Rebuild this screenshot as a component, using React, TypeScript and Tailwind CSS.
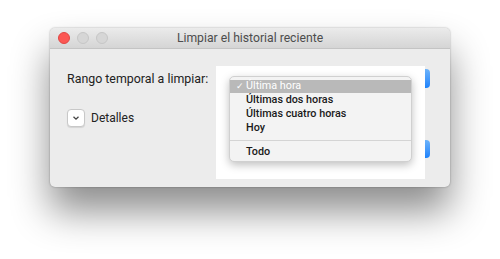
import React from "react";

export default function App() {
  const font = { fontFamily: "Roboto, 'Noto Sans', sans-serif" };
  return (
    <div className="w-[500px] h-[259px] bg-white relative overflow-hidden" style={font}>
      <div className="absolute left-[50px] top-[28px] w-[400px] h-[159px] rounded-[5px] bg-[#ececec] shadow-[0_24px_38px_rgba(0,0,0,0.45),0_0_2px_rgba(0,0,0,0.35)] flex flex-col overflow-hidden">
        <div className="h-[21px] flex items-center relative bg-gradient-to-b from-[#ebebeb] to-[#d5d5d5] border-b border-[#c4c4c4]">
          <div className="flex items-center gap-[7px] pl-[8px]">
            <span className="w-[12px] h-[12px] rounded-full bg-[#fc5753] border border-[#df4744]" />
            <span className="w-[12px] h-[12px] rounded-full bg-[#d6d6d6] border border-[#c6c6c6]" />
            <span className="w-[12px] h-[12px] rounded-full bg-[#d6d6d6] border border-[#c6c6c6]" />
          </div>
          <div className="absolute inset-0 flex items-center justify-center text-[12.2px] text-[#4d4d4d]">
            Limpiar el historial reciente
          </div>
        </div>
        <div className="flex-1 flex flex-col pl-[17px] pt-[22px] gap-[22px] text-[#222]">
          <div className="leading-[16px] text-[12.4px]">Rango temporal a limpiar:</div>
          <div className="flex items-center gap-[6px] text-[12px]">
            <span className="w-[18px] h-[18px] rounded-[4px] bg-white border border-[#c8c8c8] shadow-[0_1px_1px_rgba(0,0,0,0.1)] flex items-center justify-center">
              <svg width="8" height="6" viewBox="0 0 8 6"><path d="M1.5 1.8 L4 4.2 L6.5 1.8" fill="none" stroke="#444" strokeWidth="1.3" /></svg>
            </span>
            <span>Detalles</span>
          </div>
        </div>
        <div className="absolute left-[362px] top-[41px] w-[18px] h-[19px] rounded-[4px] bg-gradient-to-b from-[#6cb3fa] to-[#1a82fb]" />
        <div className="absolute left-[362px] top-[112px] w-[18px] h-[18px] rounded-[4px] bg-gradient-to-b from-[#6cb3fa] to-[#1a82fb]" />
        <div className="absolute left-[166px] top-[38px] w-[209px] h-[113px] bg-white">
          <div className="absolute left-[13px] top-[10px] w-[183px] h-[86px] rounded-[5px] bg-[#f3f3f3] border border-[#d0d0d0] shadow-[0_3px_8px_rgba(0,0,0,0.25)] pt-[3px] text-[10.8px] font-medium text-[#1a1a1a]" >
            <div className="h-[13px] bg-[#b9b9b9] text-white flex items-center leading-none font-normal">
              <span className="w-[16px] pl-[6px] text-[9px]">✓</span>
              <span>Última hora</span>
            </div>
            <div className="h-[14px] pl-[16px] flex items-center leading-none">Últimas dos horas</div>
            <div className="h-[14px] pl-[16px] flex items-center leading-none">Últimas cuatro horas</div>
            <div className="h-[14px] pl-[16px] flex items-center leading-none">Hoy</div>
            <div className="h-[10px] flex items-center"><div className="w-full h-px bg-[#d4d4d4]" /></div>
            <div className="h-[14px] pl-[16px] flex items-center leading-none">Todo</div>
          </div>
        </div>
      </div>
    </div>
  );
}
